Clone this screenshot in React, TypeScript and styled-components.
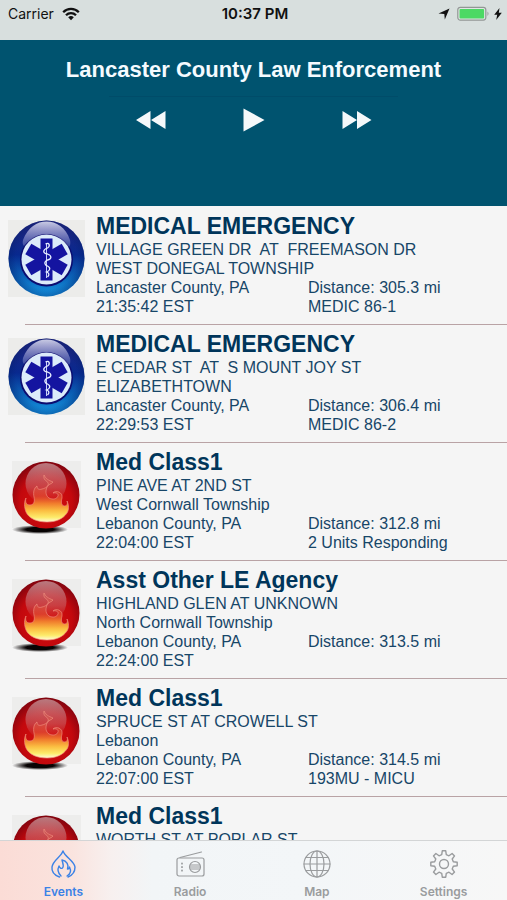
import React, { useId } from "react";
import styled, { createGlobalStyle } from "styled-components";

const GlobalStyle = createGlobalStyle`
  * { box-sizing: border-box; }
  body { margin: 0; background: #f5f5f5; }
`;

const helvetica = `"Liberation Sans", Arial, Helvetica, sans-serif`;
const system = `Inter, "Liberation Sans", sans-serif`;

const Page = styled.div`
  display: flex;
  flex-direction: column;
  height: 100vh;
  font-family: ${helvetica};
  color: #174668;
`;

const StatusBar = styled.div`
  display: grid;
  grid-template-columns: 1fr auto 1fr;
  align-items: start;
  height: 40px;
  flex: none;
  padding: 4px 5px 0 8px;
  background: #d8dfde;
  color: #111;
  font: 400 14px/20px ${system};
`;

const StatusGroup = styled.div<{ $end?: boolean }>`
  display: flex;
  align-items: center;
  justify-content: ${(p) => (p.$end ? "flex-end" : "flex-start")};
  gap: ${(p) => (p.$end ? 3 : 8)}px;
  height: 20px;
`;

const Clock = styled.time`
  font-weight: 600;
  font-size: 15px;
`;

const Player = styled.header`
  display: flex;
  flex-direction: column;
  align-items: center;
  flex: none;
  height: 166px;
  padding-top: 16px;
  background: #00536f;
  color: #f5fbff;
`;

const StationName = styled.h1`
  margin: 0;
  font-size: 22px;
  line-height: 28px;
  font-weight: 700;
  text-align: center;
`;

const Scrubber = styled.div`
  width: 57%;
  height: 1px;
  margin-top: 12px;
  background: #004c69;
`;

const Controls = styled.div`
  display: grid;
  grid-template-columns: repeat(3, 103px);
  justify-items: center;
  margin-top: 5px;
`;

const ControlButton = styled.button`
  display: grid;
  place-items: center;
  width: 44px;
  height: 36px;
  padding: 0;
  border: 0;
  background: none;
  color: #f4f8fa;
  cursor: pointer;
`;

const EventList = styled.ul`
  flex: 1;
  min-height: 0;
  margin: 0;
  padding: 1px 0 0;
  overflow-y: auto;
  scrollbar-width: none;
  list-style: none;
  background: #f5f5f5;
`;

const EventRow = styled.li`
  display: flex;
  flex-direction: column;
  height: 118px;

  &::after {
    content: "";
    flex: none;
    height: 1px;
    margin-left: 25px;
    background: #b9a3a5;
  }
`;

const EventBody = styled.div`
  display: flex;
  flex: 1;
  min-height: 0;
  padding-right: 16px;
`;

const Badge = styled.div<{ $kind: Kind }>`
  flex: none;
  width: 96px;
  padding: ${(p) => (p.$kind === "medical" ? "13px 0 0 8px" : "18px 0 0 12px")};

  svg { display: block; }
`;

const Details = styled.div`
  flex: 1;
  min-width: 0;
  padding-top: 8px;
  font-size: 16px;
  line-height: 19px;
`;

const EventTitle = styled.h2`
  height: 23px;
  margin: 0 0 2px;
  overflow: hidden;
  color: #00355a;
  font-size: 23px;
  line-height: 23px;
  font-weight: 700;
  white-space: nowrap;
`;

const Line = styled.div`
  white-space: pre;
`;

const Facts = styled.div`
  display: grid;
  grid-template-columns: 212px 1fr;
  white-space: nowrap;
`;

const TabBar = styled.nav`
  display: grid;
  grid-template-columns: repeat(4, 1fr);
  flex: none;
  height: 60px;
  border-top: 1px solid #d3d5d6;
  background: linear-gradient(90deg, #fbdcd6 0, #fae3de 14%, #f7f0ef 22%, #f2f5f7 30%, #f3f6f8 60%, #f7f7f7 100%);
`;

const Tab = styled.a<{ $active?: boolean }>`
  display: flex;
  flex-direction: column;
  align-items: center;
  justify-content: space-between;
  padding: 8px 0 0;
  color: ${(p) => (p.$active ? "#3b82e6" : "#9a9c9e")};
  font: 600 12px/16px ${system};
  text-decoration: none;
`;

type Kind = "medical" | "fire";

function MedicalIcon() {
  const id = useId();
  return (
    <svg width="77" height="77" viewBox="0 0 77 77" role="img" aria-label="Medical">
      <defs>
        <linearGradient id={id + "b"} x1="0" y1="0" x2="0" y2="1">
          <stop offset="0" stopColor="#23237c" />
          <stop offset=".45" stopColor="#08298f" />
          <stop offset=".75" stopColor="#0b64b8" />
          <stop offset="1" stopColor="#169be6" />
        </linearGradient>
        <linearGradient id={id + "g"} x1="0" y1="0" x2="0" y2="1">
          <stop offset="0" stopColor="#f4f4ff" stopOpacity=".8" />
          <stop offset="1" stopColor="#9b9bd8" stopOpacity=".3" />
        </linearGradient>
        <radialGradient id={id + "r"}>
          <stop offset=".8" stopColor="#04206e" stopOpacity="0" />
          <stop offset="1" stopColor="#041f6a" stopOpacity=".4" />
        </radialGradient>
      </defs>
      <rect width="77" height="77" fill="#ececea" />
      <circle cx="38.5" cy="38.5" r="38" fill={`url(#${id}b)`} />
      <circle cx="38.5" cy="38.5" r="38" fill={`url(#${id}r)`} />
      <circle cx="38.5" cy="40" r="26.500" fill="#0b0c70" />
      <path d="M15 20C20 7 29 1.500 38.500 1.500S58 7 62 20q1 5-1 7C55 19 48 14 38.500 14S22 19 16 26q-2-2-1-6z" fill={`url(#${id}g)`} />
      <circle cx="38.5" cy="39.500" r="25" fill="#dcebfa" />
      <g fill="#1414a0">
        {[0, 60, 120].map((a) => (
          <rect key={a} x="32.500" y="18.500" width="12" height="42" transform={`rotate(${a} 38.500 39.500)`} />
        ))}
      </g>
      <path d="M38.500 23v35" stroke="#c5cdf5" strokeWidth="1" />
      <path d="M37.500 24c4-2 5 2 2 4-5 2-5 5 0 6 5 2 4 5 0 6-4 2-3 5 0 6 4 2 2 5-1 6 3 1 3 3 1 5" fill="none" stroke="#e6edff" strokeWidth="1.300" />
    </svg>
  );
}

function FireIcon() {
  const id = useId();
  return (
    <svg width="69" height="74" viewBox="0 0 69 74" role="img" aria-label="Fire">
      <defs>
        <radialGradient id={id + "b"} cx=".5" cy=".6" r=".6">
          <stop offset="0" stopColor="#d8120e" />
          <stop offset=".65" stopColor="#c3080d" />
          <stop offset="1" stopColor="#80040f" />
        </radialGradient>
        <linearGradient id={id + "f"} gradientUnits="userSpaceOnUse" x1="0" y1="14" x2="0" y2="61">
          <stop offset="0" stopColor="#e07468" stopOpacity=".15" />
          <stop offset=".45" stopColor="#e04a30" stopOpacity=".7" />
          <stop offset=".6" stopColor="#f07a2c" />
          <stop offset=".76" stopColor="#fbbf42" />
          <stop offset=".9" stopColor="#fdeb6a" />
          <stop offset="1" stopColor="#fffbd8" />
        </linearGradient>
        <linearGradient id={id + "g"} x1="0" y1="0" x2="0" y2="1">
          <stop offset="0" stopColor="#c9a0a4" stopOpacity=".75" />
          <stop offset=".6" stopColor="#c97b80" stopOpacity=".45" />
          <stop offset="1" stopColor="#cf5054" stopOpacity="0" />
        </linearGradient>
        <radialGradient id={id + "s"}>
          <stop offset=".5" stopColor="#080404" />
          <stop offset="1" stopColor="#080404" stopOpacity="0" />
        </radialGradient>
      </defs>
      <rect width="69" height="67" fill="#ededec" />
      <ellipse cx="28" cy="68.500" rx="28" ry="4.500" fill={`url(#${id}s)`} />
      <circle cx="34" cy="34" r="33.500" fill={`url(#${id}b)`} />
      <circle cx="34" cy="22.500" r="20.500" fill={`url(#${id}g)`} />
      <path
        d="M14 37c-1 4 0 7 4 7 4 0 5-4 4-8-1-5 0-9 3-11 0 3 2 4 5 3 5-1 7-4 6-6-1-3-5-2-4-8 2 4 4 5 9 7-1 2-5 2-6 5-2 5-1 9 2 11 4 2 8 1 9-2 1-2-2-4-5-3 3-3 10-1 9 5-1 4-1 7 2 8 3 0 4-2 3-5 2 4 2 9 0 12-4 6-11 9-20 9s-18-3-21-10c-2-5-2-10 0-14z"
        fill={`url(#${id}f)`}
        stroke="#f09080"
        strokeOpacity=".65"
        strokeWidth="1"
        strokeLinejoin="round"
      />
    </svg>
  );
}

const strokeProps = { fill: "none", stroke: "currentColor", strokeWidth: 1.4, strokeLinecap: "round", strokeLinejoin: "round" } as const;

const EventsGlyph = () => (
  <svg width="30" height="30" viewBox="0 0 30 30" aria-hidden="true" {...strokeProps}>
    <path d="M11.500 28C6 26 3.500 22 4 18 5 11 13 8 15 2c2 6 11 10 12 16 0 4-2 8-7 10" />
    <path d="M13 27c-3-3-4-6-2-10 1 2 2 3 3.500 2 2-2 0-5-.5-8 5 1 7 5 5.500 9 1 0 2-1 2-2 2 4 1 7-2.500 9" />
  </svg>
);

const RadioGlyph = () => (
  <svg width="30" height="30" viewBox="0 0 30 30" aria-hidden="true" {...strokeProps} strokeWidth={1.2}>
    <rect x="2" y="9" width="27" height="18" rx="2" />
    <path d="M5 8.500 26.500 3" />
    <circle cx="20" cy="18" r="5.500" />
    <path d="M15.500 16h9M15 18h10M15.500 20h9" />
    <path d="M7 14.500v.2M7 18v.2M7 21.500v.2" strokeWidth="1.800" />
  </svg>
);

const MapGlyph = () => (
  <svg width="30" height="30" viewBox="0 0 30 30" aria-hidden="true" {...strokeProps} strokeWidth={1.2}>
    <circle cx="15" cy="15" r="13" />
    <ellipse cx="15" cy="15" rx="7" ry="13" />
    <path d="M15 2v26M2 15h26M4 8.500h22M4 21.500h22" />
  </svg>
);

const gearPath = (() => {
  const pts: string[] = [];
  for (let i = 0; i < 8; i++) {
    [[-0.24, 9.6], [-0.13, 13.3], [0.13, 13.3], [0.24, 9.6]].forEach(([a, r]) => {
      const t = (i * Math.PI) / 4 + a;
      pts.push(`${(15 + r * Math.sin(t)).toFixed(2)} ${(15 - r * Math.cos(t)).toFixed(2)}`);
    });
  }
  return `M${pts.join("L")}Z`;
})();

const SettingsGlyph = () => (
  <svg width="30" height="30" viewBox="0 0 30 30" aria-hidden="true" {...strokeProps}>
    <path d={gearPath} />
    <circle cx="15" cy="15" r="4.500" />
  </svg>
);

interface Incident {
  kind: Kind;
  title: string;
  address: string;
  place: string;
  county: string;
  time: string;
  distance: string;
  unit: string;
}

const incidents: Incident[] = [
  { kind: "medical", title: "MEDICAL EMERGENCY", address: "VILLAGE GREEN DR  AT  FREEMASON DR", place: "WEST DONEGAL TOWNSHIP", county: "Lancaster County, PA", time: "21:35:42 EST", distance: "305.3", unit: "MEDIC 86-1" },
  { kind: "medical", title: "MEDICAL EMERGENCY", address: "E CEDAR ST  AT  S MOUNT JOY ST", place: "ELIZABETHTOWN", county: "Lancaster County, PA", time: "22:29:53 EST", distance: "306.4", unit: "MEDIC 86-2" },
  { kind: "fire", title: "Med Class1", address: "PINE AVE AT 2ND ST", place: "West Cornwall Township", county: "Lebanon County, PA", time: "22:04:00 EST", distance: "312.8", unit: "2 Units Responding" },
  { kind: "fire", title: "Asst Other LE Agency", address: "HIGHLAND GLEN AT UNKNOWN", place: "North Cornwall Township", county: "Lebanon County, PA", time: "22:24:00 EST", distance: "313.5", unit: "" },
  { kind: "fire", title: "Med Class1", address: "SPRUCE ST AT CROWELL ST", place: "Lebanon", county: "Lebanon County, PA", time: "22:07:00 EST", distance: "314.5", unit: "193MU - MICU" },
  { kind: "fire", title: "Med Class1", address: "WORTH ST AT POPLAR ST", place: "", county: "", time: "", distance: "", unit: "" },
];

const tabs = [
  { label: "Events", Glyph: EventsGlyph },
  { label: "Radio", Glyph: RadioGlyph },
  { label: "Map", Glyph: MapGlyph },
  { label: "Settings", Glyph: SettingsGlyph },
];

export default function App() {
  return (
    <Page>
      <GlobalStyle />
      <StatusBar>
        <StatusGroup>
          <span>Carrier</span>
          <svg width="18" height="14" viewBox="0 0 18 14" fill="none" stroke="#111" strokeWidth="2.300" aria-label="Wi-Fi">
            <path d="M1.200 5.200a11 11 0 0 1 15.600 0M4 8.300a7 7 0 0 1 10 0" />
            <path d="M9 13.200 6.200 10.300a4 4 0 0 1 5.600 0z" fill="#111" stroke="none" />
          </svg>
        </StatusGroup>
        <Clock>10:37 PM</Clock>
        <StatusGroup $end>
          <svg width="12" height="12" viewBox="0 0 12 12" fill="#111" aria-label="Location">
            <path d="M11.500.5 6.800 11.500 6.300 6 .5 5.600z" />
          </svg>
          <svg width="38" height="16" viewBox="-4 0 38 16" aria-label="Battery charging">
            <rect x=".8" y="1.300" width="28" height="12.800" rx="2.500" fill="#e0e6e4" stroke="#929795" strokeWidth="1.200" />
            <rect x="2.500" y="3" width="24.600" height="9.400" rx="1" fill="#4cd964" />
            <path d="M30.500 5.500q2 2.200 0 4.400z" fill="#929795" />
          </svg>
          <svg width="8" height="12" viewBox="0 0 8 12" fill="#111" aria-hidden="true">
            <path d="M5.500 0 .2 6.800h3L2.200 12 7.800 4.800h-3z" />
          </svg>
        </StatusGroup>
      </StatusBar>

      <Player>
        <StationName>Lancaster County Law Enforcement</StationName>
        <Scrubber />
        <Controls>
          <ControlButton aria-label="Previous">
            <svg width="30" height="20" viewBox="0 0 30 20" fill="currentColor"><path d="M0 10 14.500 1v18zM15 10 29.500 1v18z" /></svg>
          </ControlButton>
          <ControlButton aria-label="Play">
            <svg width="22" height="24" viewBox="0 0 22 24" fill="currentColor"><path d="M.5.500 21.500 12 .5 23.500z" /></svg>
          </ControlButton>
          <ControlButton aria-label="Next">
            <svg width="30" height="20" viewBox="0 0 30 20" fill="currentColor"><path d="M.5 1 15 10 .5 19zM15 1 29.500 10 15 19z" /></svg>
          </ControlButton>
        </Controls>
      </Player>

      <EventList>
        {incidents.map((e, i) => (
          <EventRow key={i}>
            <EventBody>
              <Badge $kind={e.kind}>{e.kind === "medical" ? <MedicalIcon /> : <FireIcon />}</Badge>
              <Details>
                <EventTitle>{e.title}</EventTitle>
                <Line>{e.address}</Line>
                {e.place && <Line>{e.place}</Line>}
                {e.county && (
                  <Facts>
                    <span>{e.county}</span>
                    <span>Distance: {e.distance} mi</span>
                    <span>{e.time}</span>
                    <span>{e.unit}</span>
                  </Facts>
                )}
              </Details>
            </EventBody>
          </EventRow>
        ))}
      </EventList>

      <TabBar>
        {tabs.map(({ label, Glyph }, i) => (
          <Tab key={label} href={`#${label.toLowerCase()}`} $active={i === 0} aria-current={i === 0 ? "page" : undefined}>
            <Glyph />
            {label}
          </Tab>
        ))}
      </TabBar>
    </Page>
  );
}
